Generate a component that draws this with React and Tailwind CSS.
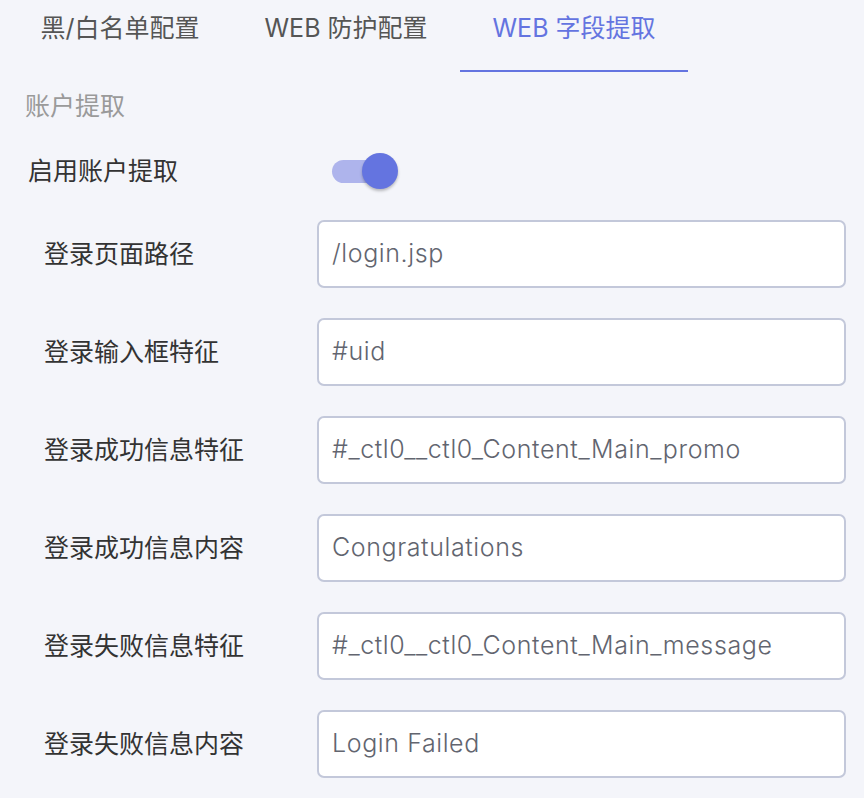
import React from "react";

const font = { fontFamily: '"Inter", "Noto Sans CJK SC", sans-serif' };

const rows = [
  ["登录页面路径", "/login.jsp"],
  ["登录输入框特征", "#uid"],
  ["登录成功信息特征", "#_ctl0__ctl0_Content_Main_promo"],
  ["登录成功信息内容", "Congratulations"],
  ["登录失败信息特征", "#_ctl0__ctl0_Content_Main_message"],
  ["登录失败信息内容", "Login Failed"],
];

export default function App() {
  return (
    <div
      className="w-[864px] h-[798px] bg-[#f4f5fa] overflow-hidden"
      style={font}
    >
      <div className="flex h-[72px] pl-[12px]">
        <div className="w-[216px] h-full flex items-center justify-center pb-[14px] text-[25px] text-[#555555]">
          黑/白名单配置
        </div>
        <div className="ml-[4px] w-[228px] h-full flex items-center justify-center pb-[14px] text-[25px] text-[#555555]">
          WEB 防护配置
        </div>
        <div className="w-[228px] h-full flex items-center justify-center pb-[12px] text-[25px] text-[#6474e0] border-b-2 border-[#6474e0]">
          WEB 字段提取
        </div>
      </div>
      <div className="pl-[25px] mt-[20px] h-[28px] leading-[28px] text-[25px] text-[#9a9a9a]">
        账户提取
      </div>
      <div className="flex items-center mt-[33px] h-[36px] pl-[28px]">
        <div className="w-[304px] text-[25px] text-[#333333] leading-[36px]">
          启用账户提取
        </div>
        <div className="relative w-[58px] h-[36px] flex items-center">
          <div className="w-[54px] h-[23px] rounded-full bg-[#aeb4ec]" />
          <div className="absolute left-[30px] top-0 w-[36px] h-[36px] rounded-full bg-[#6474e0] shadow-[0_2px_3px_rgba(0,0,0,0.25)]" />
        </div>
      </div>
      <div className="flex flex-col gap-[30px] mt-[31px] pl-[44px] pr-[18px]">
        {rows.map(([label, value]) => (
          <div key={label} className="flex items-center h-[68px]">
            <div className="w-[273px] pt-[2px] text-[25px] text-[#333333]">{label}</div>
            <div className="flex-1 h-[68px] flex items-center bg-white border-2 border-[#c3c8da] rounded-[7px] pl-[13px] text-[25px] tracking-[0.6px] font-light text-[#62656f]">
              {value}
            </div>
          </div>
        ))}
      </div>
    </div>
  );
}
